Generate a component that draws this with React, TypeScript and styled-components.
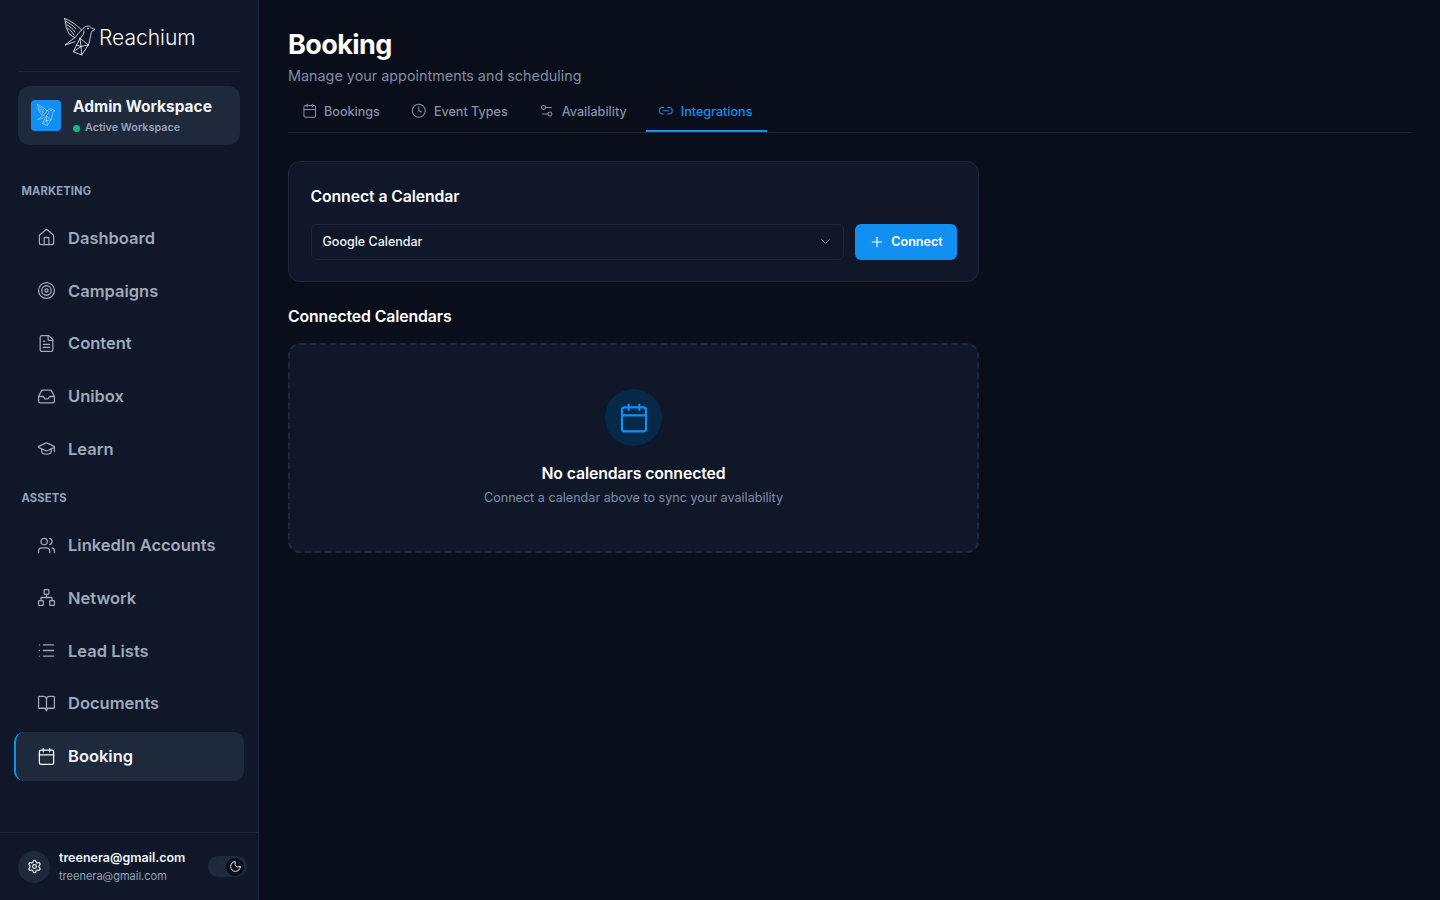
import styled, { createGlobalStyle } from "styled-components";
import {
  BookOpen,
  Calendar,
  ChevronDown,
  Clock,
  FileText,
  GraduationCap,
  House,
  Inbox,
  Link2,
  List,
  Moon,
  Network,
  Plus,
  Settings,
  Settings2,
  Target,
  Users,
} from "lucide-react";

const GlobalStyle = createGlobalStyle`
  html, body, #root {
    margin: 0;
    height: 100%;
  }
  body {
    background: #0a0e1a;
    font-family: Inter, "Liberation Sans", sans-serif;
    color: #fff;
  }
  * {
    box-sizing: border-box;
  }
`;

const Layout = styled.div`
  display: flex;
  height: 900px;
  overflow: hidden;
`;

const Sidebar = styled.aside`
  width: 259px;
  flex-shrink: 0;
  display: flex;
  flex-direction: column;
  background: #0f1729;
  border-right: 1px solid #1e293b;
`;

const Brand = styled.div`
  height: 72px;
  margin: 0 18px;
  display: flex;
  align-items: center;
  gap: 4px;
  padding: 3px 0 0 46px;
  border-bottom: 1px solid #1e293b;
`;

const BrandName = styled.span`
  font-size: 21px;
  font-weight: 300;
  color: #f8fafc;
`;

const Workspace = styled.div`
  margin: 14px 18px 0;
  height: 59px;
  display: flex;
  align-items: center;
  gap: 12px;
  padding: 0 13px;
  background: #1e293b;
  border-radius: 12px;
`;

const WorkspaceIcon = styled.div`
  width: 30px;
  height: 31px;
  display: flex;
  align-items: center;
  justify-content: center;
  background: #1190f2;
  border-radius: 4px;
`;

const WorkspaceName = styled.div`
  font-size: 15.5px;
  font-weight: 700;
  line-height: 20px;
  margin-top: 1px;
  color: #f1f5f9;
`;

const WorkspaceStatus = styled.div`
  display: flex;
  align-items: center;
  gap: 5px;
  margin-top: 4px;
  font-size: 10.8px;
  font-weight: 600;
  line-height: 14px;
  color: #94a3b8;
`;

const StatusDot = styled.span`
  width: 7px;
  height: 7px;
  border-radius: 50%;
  background: #10b981;
`;

const Nav = styled.nav`
  flex: 1;
  display: flex;
  flex-direction: column;
  padding: 0 14px;
`;

const SectionLabel = styled.div<{ $first?: boolean }>`
  padding-left: 7.5px;
  margin: ${(props) => (props.$first ? "39px 0 15.3px" : "14px 0 15.7px")};
  font-size: 11.2px;
  font-weight: 700;
  line-height: 14px;
  letter-spacing: 0.15px;
  color: #94a3b8;
`;

const NavItem = styled.a<{ $active?: boolean }>`
  height: 49px;
  flex-shrink: 0;
  margin-bottom: 3.75px;
  display: flex;
  align-items: center;
  gap: 12px;
  padding-left: 21px;
  font-size: 16.5px;
  font-weight: 600;
  border-radius: 10px;
  color: ${(props) => (props.$active ? "#f1f5f9" : "#a0a9b8")};
  background: ${(props) => (props.$active ? "#1e293b" : "transparent")};
  border-left: 2px solid ${(props) => (props.$active ? "#1190f2" : "transparent")};
`;

const Footer = styled.div`
  height: 68px;
  display: flex;
  align-items: center;
  padding: 0 11px 0 18px;
  border-top: 1px solid #1e293b;
`;

const SettingsButton = styled.div`
  width: 32px;
  height: 32px;
  display: flex;
  align-items: center;
  justify-content: center;
  border-radius: 50%;
  background: #1e293b;
  color: #f1f5f9;
  margin-right: 9px;
`;

const UserBlock = styled.div`
  flex: 1;
  margin-top: 1px;
`;

const UserName = styled.div`
  font-size: 12.5px;
  font-weight: 600;
  line-height: 16px;
  color: #f1f5f9;
`;

const UserEmail = styled.div`
  margin-top: 2px;
  font-size: 11px;
  font-weight: 400;
  line-height: 16px;
  color: #94a3b8;
`;

const ThemeToggle = styled.div`
  width: 39px;
  height: 21px;
  display: flex;
  align-items: center;
  justify-content: flex-end;
  padding-right: 3px;
  border-radius: 11px;
  background: #1e293b;
`;

const ToggleKnob = styled.span`
  width: 18px;
  height: 18px;
  display: flex;
  align-items: center;
  justify-content: center;
  border-radius: 50%;
  background: #0a0e1a;
  color: #f1f5f9;
`;

const Main = styled.main`
  flex: 1;
  padding: 27px 29px;
`;

const PageTitle = styled.h1`
  margin: 0;
  font-size: 27px;
  font-weight: 700;
  line-height: 36px;
  letter-spacing: -0.6px;
`;

const PageSubtitle = styled.p`
  margin: 3px 0 0;
  font-size: 14.38px;
  line-height: 20px;
  color: #7f8ea3;
`;

const Tabs = styled.div`
  display: flex;
  gap: 4px;
  margin-top: 6px;
  padding-left: 1px;
  height: 41px;
  border-bottom: 1px solid #1e293b;
`;

const Tab = styled.button<{ $active?: boolean }>`
  height: 40px;
  display: flex;
  align-items: center;
  gap: 7px;
  padding: 0 15px 0 12.5px;
  background: none;
  border: none;
  border-bottom: 2px solid ${(props) => (props.$active ? "#1190f2" : "transparent")};
  font-family: inherit;
  font-size: 12.6px;
  font-weight: 500;
  color: ${(props) => (props.$active ? "#1190f2" : "#8391a7")};
`;

const Column = styled.div`
  width: 691px;
`;

const Card = styled.section`
  margin-top: 28px;
  padding: 23px 21px 21px 21.5px;
  background: #0f1729;
  border: 1px solid #1e293b;
  border-radius: 12px;
`;

const CardTitle = styled.h2`
  margin: 0 0 15px;
  font-size: 15.8px;
  font-weight: 600;
  line-height: 24px;
  letter-spacing: -0.1px;
`;

const ConnectRow = styled.div`
  display: flex;
  gap: 11px;
`;

const SelectBox = styled.div`
  flex: 1;
  height: 36px;
  display: flex;
  align-items: center;
  justify-content: space-between;
  padding: 0 10px 1px 11px;
  background: transparent;
  border: 1px solid #1e293b;
  border-radius: 6px;
  font-size: 12.5px;
  font-weight: 500;
  color: #f1f5f9;
`;

const ChevronIcon = styled(ChevronDown)`
  color: #7f8ea3;
`;

const ConnectButton = styled.button`
  width: 102px;
  height: 36px;
  display: flex;
  align-items: center;
  justify-content: center;
  gap: 6px;
  padding: 0 0 1px;
  background: #1190f2;
  border: none;
  border-radius: 6px;
  font-family: inherit;
  font-size: 12.6px;
  font-weight: 600;
  color: #fff;
`;

const SectionTitle = styled.h2`
  margin: 23px 0 14px;
  font-size: 15.8px;
  font-weight: 600;
  line-height: 24px;
  letter-spacing: -0.1px;
`;

const EmptyState = styled.div`
  height: 210px;
  display: flex;
  flex-direction: column;
  align-items: center;
  padding-top: 44px;
  background: #0f1729;
  border: 2px dashed #1e293b;
  border-radius: 12px;
`;

const EmptyCircle = styled.div`
  width: 57px;
  height: 57px;
  display: flex;
  align-items: center;
  justify-content: center;
  border-radius: 50%;
  background: #06294a;
  color: #1190f2;
`;

const EmptyTitle = styled.div`
  margin-top: 16px;
  font-size: 15.8px;
  font-weight: 600;
  line-height: 24px;
  letter-spacing: -0.1px;
`;

const EmptyText = styled.div`
  margin-top: 3px;
  font-size: 12.6px;
  line-height: 18px;
  color: #7f8ea3;
`;

const BirdLogo = ({ size, color }: { size: number; color: string }) => (
  <svg
    width={size}
    height={(size * 38) / 31}
    viewBox="0 0 31 38"
    fill="none"
    stroke={color}
    strokeWidth="0.8"
    strokeLinejoin="round"
    strokeLinecap="round"
  >
    <path d="M0.5 0.5C5 2 11 5.5 17.5 12C19 10.5 21 8 24.3 8C26 8 27 9.5 27.7 10.3L31 11.3L27.7 13.5C26.5 16 26.5 21 24.3 27" />
    <path d="M0.5 0.5C2.5 4 1 8.5 3.5 12.5C4.5 16 7.5 18.5 11 19.5L1 27L11 23.7" />
    <path d="M2.5 3.5C6 6 9 7 12 11M2.8 6.5C6 9 8.5 10 11 14M3.5 10C6 12.5 8 13 10 17" />
    <path d="M17.5 12C15.5 14 13 17 11 19.5M20 13C20 16 19 18 16 20.3" />
    <path d="M16 20.3L24.3 27L17.7 37L9.3 33.7L16 20.3Z" />
    <path d="M9.3 33.7L17 28.5L17.7 37M24.3 27L17 28.5L12.5 27M16 20.3L17 28.5" />
    <circle cx="24" cy="10.5" r="0.5" />
  </svg>
);

const marketingItems = [
  { label: "Dashboard", icon: House },
  { label: "Campaigns", icon: Target },
  { label: "Content", icon: FileText },
  { label: "Unibox", icon: Inbox },
  { label: "Learn", icon: GraduationCap },
];

const assetItems = [
  { label: "LinkedIn Accounts", icon: Users },
  { label: "Network", icon: Network },
  { label: "Lead Lists", icon: List },
  { label: "Documents", icon: BookOpen },
  { label: "Booking", icon: Calendar, active: true },
];

const tabs = [
  { label: "Bookings", icon: Calendar },
  { label: "Event Types", icon: Clock },
  { label: "Availability", icon: Settings2 },
  { label: "Integrations", icon: Link2, active: true },
];

export default function App() {
  return (
    <>
      <GlobalStyle />
      <Layout>
        <Sidebar>
          <Brand>
            <BirdLogo size={31} color="#f1f5f9" />
            <BrandName>Reachium</BrandName>
          </Brand>
          <Workspace>
            <WorkspaceIcon>
              <BirdLogo size={18} color="#d5ebfd" />
            </WorkspaceIcon>
            <div>
              <WorkspaceName>Admin Workspace</WorkspaceName>
              <WorkspaceStatus>
                <StatusDot />
                Active Workspace
              </WorkspaceStatus>
            </div>
          </Workspace>
          <Nav>
            <SectionLabel $first>MARKETING</SectionLabel>
            {marketingItems.map((item) => (
              <NavItem key={item.label}>
                <item.icon size={19} strokeWidth={1.6} />
                {item.label}
              </NavItem>
            ))}
            <SectionLabel>ASSETS</SectionLabel>
            {assetItems.map((item) => (
              <NavItem key={item.label} $active={item.active}>
                <item.icon size={19} strokeWidth={1.6} />
                {item.label}
              </NavItem>
            ))}
          </Nav>
          <Footer>
            <SettingsButton>
              <Settings size={15} strokeWidth={1.8} />
            </SettingsButton>
            <UserBlock>
              <UserName>treenera@gmail.com</UserName>
              <UserEmail>treenera@gmail.com</UserEmail>
            </UserBlock>
            <ThemeToggle>
              <ToggleKnob>
                <Moon size={13} strokeWidth={1.7} />
              </ToggleKnob>
            </ThemeToggle>
          </Footer>
        </Sidebar>
        <Main>
          <PageTitle>Booking</PageTitle>
          <PageSubtitle>Manage your appointments and scheduling</PageSubtitle>
          <Tabs>
            {tabs.map((tab) => (
              <Tab key={tab.label} $active={tab.active}>
                <tab.icon size={15.5} strokeWidth={1.6} />
                {tab.label}
              </Tab>
            ))}
          </Tabs>
          <Column>
            <Card>
              <CardTitle>Connect a Calendar</CardTitle>
              <ConnectRow>
                <SelectBox>
                  Google Calendar
                  <ChevronIcon size={15} strokeWidth={1.6} />
                </SelectBox>
                <ConnectButton>
                  <Plus size={16} strokeWidth={1.7} />
                  Connect
                </ConnectButton>
              </ConnectRow>
            </Card>
            <SectionTitle>Connected Calendars</SectionTitle>
            <EmptyState>
              <EmptyCircle>
                <Calendar size={32} strokeWidth={1.6} />
              </EmptyCircle>
              <EmptyTitle>No calendars connected</EmptyTitle>
              <EmptyText>Connect a calendar above to sync your availability</EmptyText>
            </EmptyState>
          </Column>
        </Main>
      </Layout>
    </>
  );
}
